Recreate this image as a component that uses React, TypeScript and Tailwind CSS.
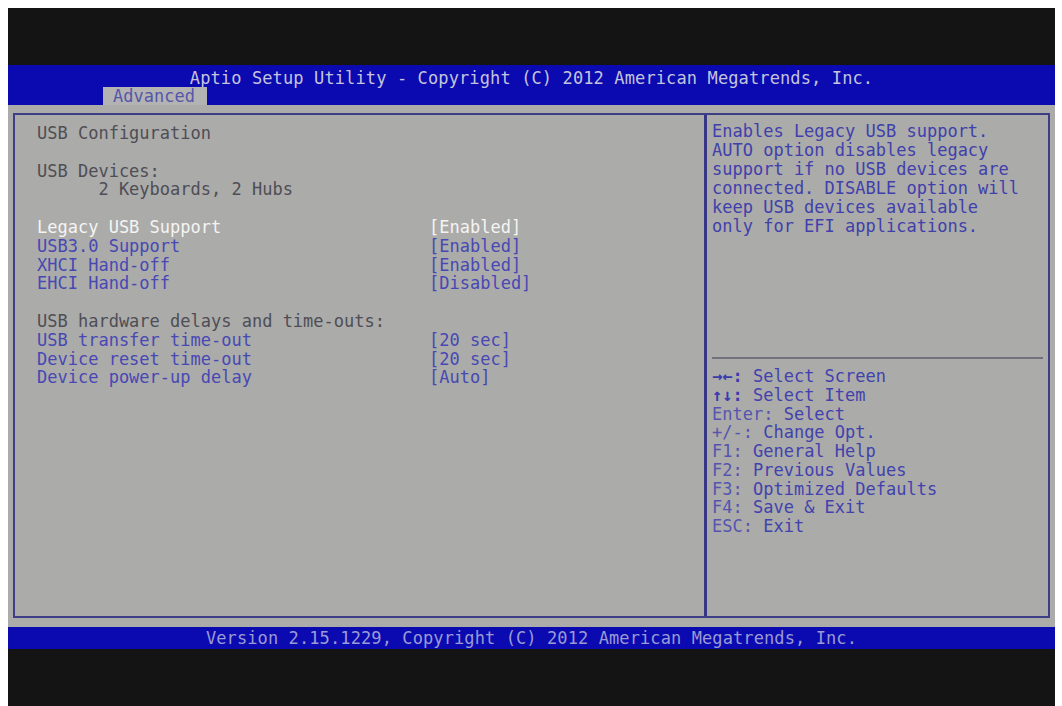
import React from "react";

const mono = { fontFamily: '"DejaVu Sans Mono", "Liberation Mono", monospace' };

const items: { label: string; value?: string; kind: "head" | "item" | "sel" | "blank" }[] = [
  { label: "USB Configuration", kind: "head" },
  { label: "", kind: "blank" },
  { label: "USB Devices:", kind: "head" },
  { label: "      2 Keyboards, 2 Hubs", kind: "head" },
  { label: "", kind: "blank" },
  { label: "Legacy USB Support", value: "[Enabled]", kind: "sel" },
  { label: "USB3.0 Support", value: "[Enabled]", kind: "item" },
  { label: "XHCI Hand-off", value: "[Enabled]", kind: "item" },
  { label: "EHCI Hand-off", value: "[Disabled]", kind: "item" },
  { label: "", kind: "blank" },
  { label: "USB hardware delays and time-outs:", kind: "head" },
  { label: "USB transfer time-out", value: "[20 sec]", kind: "item" },
  { label: "Device reset time-out", value: "[20 sec]", kind: "item" },
  { label: "Device power-up delay", value: "[Auto]", kind: "item" },
];

const help = [
  "Enables Legacy USB support.",
  "AUTO option disables legacy",
  "support if no USB devices are",
  "connected. DISABLE option will",
  "keep USB devices available",
  "only for EFI applications.",
];

const keys: [string, string][] = [
  ["→←:", " Select Screen"],
  ["↑↓:", " Select Item"],
  ["Enter:", " Select"],
  ["+/-:", " Change Opt."],
  ["F1:", " General Help"],
  ["F2:", " Previous Values"],
  ["F3:", " Optimized Defaults"],
  ["F4:", " Save & Exit"],
  ["ESC:", " Exit"],
];

export default function App() {
  return (
    <div className="w-[1062px] h-[706px] bg-white pl-[8px] pt-[8px] pr-[7px] overflow-hidden" style={mono}>
      <div className="flex flex-col h-full bg-[#141414]">
        <div className="h-[57px]" />
        <div className="h-[40px] bg-[#0a0ab0] flex flex-col">
          <div className="h-[22px] flex items-center justify-center text-[17px] leading-[20px] tracking-[0.12px] text-[#c4c4dc] whitespace-pre pt-[4px]">
            Aptio Setup Utility - Copyright (C) 2012 American Megatrends, Inc.
          </div>
          <div className="h-[18px] flex">
            <div className="ml-[95px] w-[104px] h-[18px] bg-[#b3b3b3] text-[#5656aa] text-[17px] leading-[18px] pl-[10px]">
              Advanced
            </div>
          </div>
        </div>
        <div className="h-[522px] bg-[#ababa9] px-[5px] pt-[8px] pb-[9px]">
          <div className="h-full flex border-2 border-[#3e3e86]">
            <div className="w-[689px] pl-[22px] pt-[9px] text-[17px] leading-[18.8px]">
              {items.map((it, i) => (
                <div key={i} className="flex h-[18.8px] whitespace-pre">
                  <div
                    className={
                      "w-[392px] " +
                      (it.kind === "head"
                        ? "text-[#4e4e56]"
                        : it.kind === "sel"
                        ? "text-[#f4f4f4]"
                        : "text-[#4848b4]")
                    }
                  >
                    {it.label}
                  </div>
                  {it.value && (
                    <div className={it.kind === "sel" ? "text-[#f4f4f4]" : "text-[#4848b4]"}>{it.value}</div>
                  )}
                </div>
              ))}
            </div>
            <div className="flex-1 flex flex-col border-l-[3px] border-[#363684]">
              <div className="h-[242px] pl-[5px] pt-[7px] text-[17px] leading-[18.9px] text-[#4040ac] whitespace-pre">
                {help.map((l, i) => (
                  <div key={i}>{l}</div>
                ))}
              </div>
              <div className="mx-[5px] h-[2px] bg-[#72727e]" />
              <div className="pl-[5px] pt-[8px] text-[17px] leading-[18.75px] whitespace-pre">
                {keys.map(([k, d], i) => (
                  <div key={i}>
                    <span className="text-[#5050b0] font-bold">{k.length <= 3 && k.startsWith("F") ? "" : ""}</span>
                    <span className={k.includes("→") || k.includes("↑") ? "text-[#3a3ab0] font-bold" : "text-[#5555b0]"}>{k}</span>
                    <span className="text-[#4242ae]">{d}</span>
                  </div>
                ))}
              </div>
            </div>
          </div>
        </div>
        <div className="h-[22px] bg-[#0a0ab0] flex items-center justify-center text-[17px] leading-[22px] tracking-[0.1px] text-[#9a9ad4] whitespace-pre">
          Version 2.15.1229, Copyright (C) 2012 American Megatrends, Inc.
        </div>
        <div className="flex-1" />
      </div>
    </div>
  );
}
